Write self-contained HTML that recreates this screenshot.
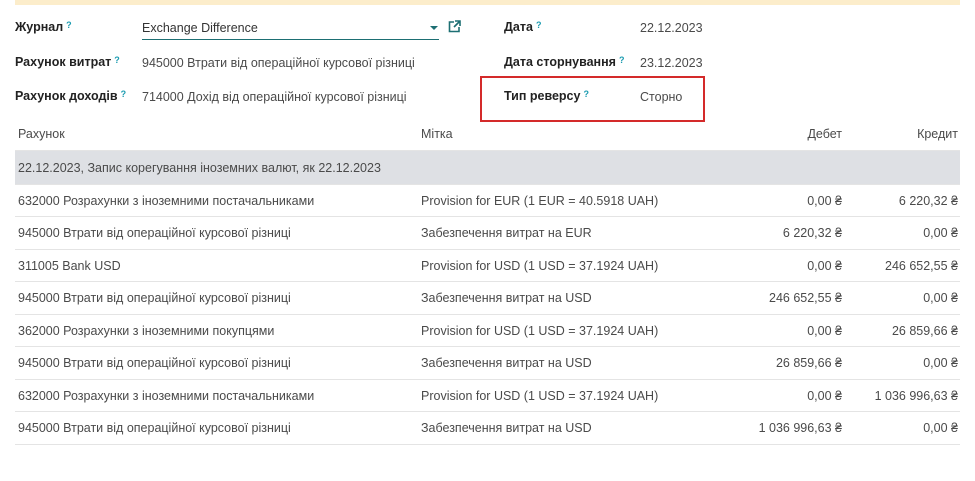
<!DOCTYPE html>
<html><head><meta charset="utf-8"><style>
*{margin:0;padding:0;box-sizing:border-box}
body{width:975px;height:481px;background:#fff;font-family:"Liberation Sans","Noto Sans CJK SC",sans-serif;font-size:12.5px;color:#4a4a4a;position:relative;overflow:hidden}
.banner{position:absolute;left:15px;top:0;width:945px;height:5px;background:#fcedcb}
.a{position:absolute;white-space:nowrap}
.lbl{font-weight:bold;color:#222}
.q{color:#1a9bb0;font-size:9px;vertical-align:top;margin-left:3px;font-weight:bold}
.inp{position:absolute;left:142px;top:18px;width:297px;height:22px;border-bottom:1.5px solid #1d6f73}
.box{position:absolute;left:480px;top:76px;width:225px;height:46px;border:2px solid #d42a2a}
table{position:absolute;left:15px;top:118px;width:945px;border-collapse:collapse}
td,th{height:32.5px;padding:1px 3px 0;font-weight:normal;text-align:left;border-bottom:1px solid #e4e4e4;white-space:nowrap}
th{color:#4a4a4a;height:32px}
.r{text-align:right;padding-right:3px}
.r2{text-align:right;padding-right:2px;width:115px}
.g td{background:#dee0e4;height:34px}
</style></head><body>
<div class="banner"></div>
<div class="a lbl" style="left:15px;top:20px">Журнал<span class="q">?</span></div>
<div class="inp"></div>
<div class="a" style="left:142px;top:21px;color:#333">Exchange Difference</div>
<div class="a" style="left:430px;top:26px;width:0;height:0;border-left:4px solid transparent;border-right:4px solid transparent;border-top:4px solid #1d6f73"></div>
<svg class="a" style="left:448px;top:20px" width="13" height="13" viewBox="0 0 13 13"><path d="M6 2H1.5v9.5H11V7" fill="none" stroke="#1d6f73" stroke-width="1.6"/><path d="M7 1h5v5M12 1L6 7" fill="none" stroke="#1d6f73" stroke-width="1.6"/></svg>
<div class="a lbl" style="left:15px;top:55px">Рахунок витрат<span class="q">?</span></div>
<div class="a" style="left:142px;top:56px">945000 Втрати від операційної курсової різниці</div>
<div class="a lbl" style="left:15px;top:89px">Рахунок доходів<span class="q">?</span></div>
<div class="a" style="left:142px;top:90px">714000 Дохід від операційної курсової різниці</div>
<div class="a lbl" style="left:504px;top:20px">Дата<span class="q">?</span></div>
<div class="a" style="left:640px;top:21px">22.12.2023</div>
<div class="a lbl" style="left:504px;top:55px">Дата сторнування<span class="q">?</span></div>
<div class="a" style="left:640px;top:56px">23.12.2023</div>
<div class="box"></div>
<div class="a lbl" style="left:504px;top:89px">Тип реверсу<span class="q">?</span></div>
<div class="a" style="left:640px;top:90px">Сторно</div>
<table>
<tr><th style="width:403px">Рахунок</th><th style="width:280px">Мітка</th><th class="r">Дебет</th><th class="r2">Кредит</th></tr>
<tr class="g"><td colspan="4">22.12.2023, Запис корегування іноземних валют, як 22.12.2023</td></tr>
<tr><td>632000 Розрахунки з іноземними постачальниками</td><td>Provision for EUR (1 EUR = 40.5918 UAH)</td><td class="r">0,00 ₴</td><td class="r2">6 220,32 ₴</td></tr>
<tr><td>945000 Втрати від операційної курсової різниці</td><td>Забезпечення витрат на EUR</td><td class="r">6 220,32 ₴</td><td class="r2">0,00 ₴</td></tr>
<tr><td>311005 Bank USD</td><td>Provision for USD (1 USD = 37.1924 UAH)</td><td class="r">0,00 ₴</td><td class="r2">246 652,55 ₴</td></tr>
<tr><td>945000 Втрати від операційної курсової різниці</td><td>Забезпечення витрат на USD</td><td class="r">246 652,55 ₴</td><td class="r2">0,00 ₴</td></tr>
<tr><td>362000 Розрахунки з іноземними покупцями</td><td>Provision for USD (1 USD = 37.1924 UAH)</td><td class="r">0,00 ₴</td><td class="r2">26 859,66 ₴</td></tr>
<tr><td>945000 Втрати від операційної курсової різниці</td><td>Забезпечення витрат на USD</td><td class="r">26 859,66 ₴</td><td class="r2">0,00 ₴</td></tr>
<tr><td>632000 Розрахунки з іноземними постачальниками</td><td>Provision for USD (1 USD = 37.1924 UAH)</td><td class="r">0,00 ₴</td><td class="r2">1 036 996,63 ₴</td></tr>
<tr><td>945000 Втрати від операційної курсової різниці</td><td>Забезпечення витрат на USD</td><td class="r">1 036 996,63 ₴</td><td class="r2">0,00 ₴</td></tr>
</table>
</body></html>
